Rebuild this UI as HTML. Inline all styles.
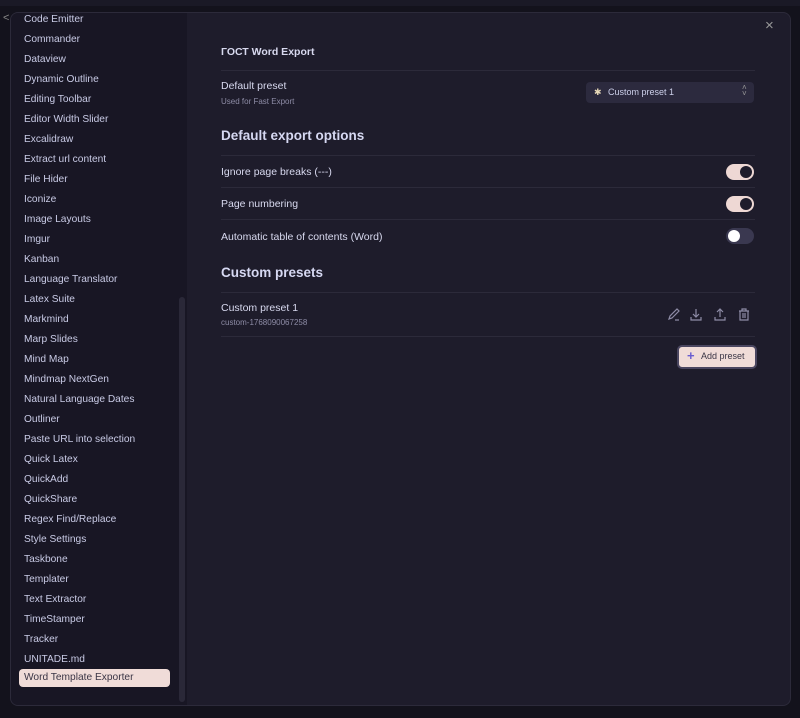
<!DOCTYPE html><html><head><style>
body{margin:0;width:800px;height:718px;background:#13121c;font-family:"Liberation Sans",sans-serif;overflow:hidden;position:relative}
.top{position:absolute;left:0;top:0;width:800px;height:6px;background:#1a1926}
.modal{position:absolute;left:10px;top:12px;width:779px;height:692px;background:#1e1c2b;border:1px solid #2c2a3a;border-radius:8px;overflow:hidden}
.side{position:absolute;left:0;top:0;width:176px;height:692px;background:#181624}
.side .it{position:absolute;left:13px;font-size:10.2px;color:#c9cbe6;line-height:14px}
.sel{position:absolute;left:8px;top:656px;width:151px;height:18px;background:#f0dcd8;border-radius:4px}
.scroll{position:absolute;left:168px;top:284px;width:6px;height:405px;background:#2a2838;border-radius:3px}
.c{position:absolute;color:#d8d9ef;font-size:10.5px}
.line{position:absolute;left:210px;width:534px;height:1px;background:#2c2a3a}
.tg{position:absolute;left:715px;width:28px;height:16px;border-radius:8px;background:#eed8d4}
.tg i{position:absolute;right:2px;top:2px;width:12px;height:12px;border-radius:6px;background:#1e1c2b}
.h{position:absolute;left:210px;font-size:13.5px;font-weight:bold;color:#d6d8f2}
</style></head><body>
<div class="top"></div>
<div style="position:absolute;left:3px;top:12px;color:#888;font-size:11px">&lt;</div>
<div class="modal">
<div class="side">
<div class="sel"></div>
<div class="scroll"></div>
<div class="it" style="top:0">Code Emitter</div><div class="it" style="top:20px">Commander</div><div class="it" style="top:40px">Dataview</div><div class="it" style="top:60px">Dynamic Outline</div><div class="it" style="top:80px">Editing Toolbar</div><div class="it" style="top:100px">Editor Width Slider</div><div class="it" style="top:120px">Excalidraw</div><div class="it" style="top:140px">Extract url content</div><div class="it" style="top:160px">File Hider</div><div class="it" style="top:180px">Iconize</div><div class="it" style="top:200px">Image Layouts</div><div class="it" style="top:220px">Imgur</div><div class="it" style="top:240px">Kanban</div><div class="it" style="top:260px">Language Translator</div><div class="it" style="top:280px">Latex Suite</div><div class="it" style="top:300px">Markmind</div><div class="it" style="top:320px">Marp Slides</div><div class="it" style="top:340px">Mind Map</div><div class="it" style="top:360px">Mindmap NextGen</div><div class="it" style="top:380px">Natural Language Dates</div><div class="it" style="top:400px">Outliner</div><div class="it" style="top:420px">Paste URL into selection</div><div class="it" style="top:440px">Quick Latex</div><div class="it" style="top:460px">QuickAdd</div><div class="it" style="top:480px">QuickShare</div><div class="it" style="top:500px">Regex Find/Replace</div><div class="it" style="top:520px">Style Settings</div><div class="it" style="top:540px">Taskbone</div><div class="it" style="top:560px">Templater</div><div class="it" style="top:580px">Text Extractor</div><div class="it" style="top:600px">TimeStamper</div><div class="it" style="top:620px">Tracker</div><div class="it" style="top:640px">UNITADE.md</div><div class="it" style="top:658px;color:#3a3545">Word Template Exporter</div>
</div>
<div class="c" style="left:754px;top:4px;font-size:15px;color:#999">×</div>
<div class="c" style="left:210px;top:33px;font-weight:bold;font-size:10.5px">ГОСТ Word Export</div>
<div class="line" style="top:57px"></div>
<div class="c" style="left:210px;top:67px">Default preset</div>
<div class="c" style="left:210px;top:84px;font-size:8px;color:#8e8ca6">Used for Fast Export</div>
<div style="position:absolute;left:575px;top:69px;width:168px;height:21px;background:#2c2a3e;border-radius:4px"></div>
<div class="c" style="left:583px;top:74px;font-size:9px;color:#e8d9b8">✱</div>
<div class="c" style="left:597px;top:74px;font-size:9px;color:#cdd0ea">Custom preset 1</div>
<div class="c" style="left:731px;top:72px;font-size:8px;color:#999;line-height:6px">˄<br>˅</div>
<div class="h" style="top:115px">Default export options</div>
<div class="line" style="top:142px"></div>
<div class="c" style="left:210px;top:153px">Ignore page breaks (---)</div>
<div class="tg" style="top:151px"><i></i></div>
<div class="line" style="top:174px"></div>
<div class="c" style="left:210px;top:185px">Page numbering</div>
<div class="tg" style="top:183px"><i></i></div>
<div class="line" style="top:206px"></div>
<div class="c" style="left:210px;top:218px">Automatic table of contents (Word)</div>
<div class="tg" style="top:215px;background:#3a3850"><i style="left:2px;right:auto;background:#fff"></i></div>
<div class="h" style="top:252px">Custom presets</div>
<div class="line" style="top:279px"></div>
<div class="c" style="left:210px;top:289px">Custom preset 1</div>
<div class="c" style="left:210px;top:305px;font-size:8px;color:#8e8ca6">custom-1768090067258</div>
<svg style="position:absolute;left:655px;top:294px" width="90" height="16" fill="none" stroke="#8e8ca6" stroke-width="1.2">
<path d="M3 12l1-3 7-7 2 2-7 7-3 1zM9 13h4"/>
<path d="M30 2v8M27 7l3 3 3-3M25 10v3h10v-3"/>
<path d="M54 10V2M51 5l3-3 3 3M49 10v3h10v-3"/>
<path d="M73 4h10M76 4V2h4v2M74 4v9h8V4M77 6v5M79 6v5"/>
</svg>
<div class="line" style="top:323px"></div>
<div style="position:absolute;left:666px;top:332px;width:76px;height:20px;background:#f0dcd8;border:2px solid #4a4660;border-radius:5px"></div>
<div class="c" style="left:676px;top:335px;font-size:13px;color:#6a5ed0;font-weight:bold">+</div>
<div class="c" style="left:690px;top:338px;font-size:9px;color:#3a3545">Add preset</div>
</div>
</body></html>
